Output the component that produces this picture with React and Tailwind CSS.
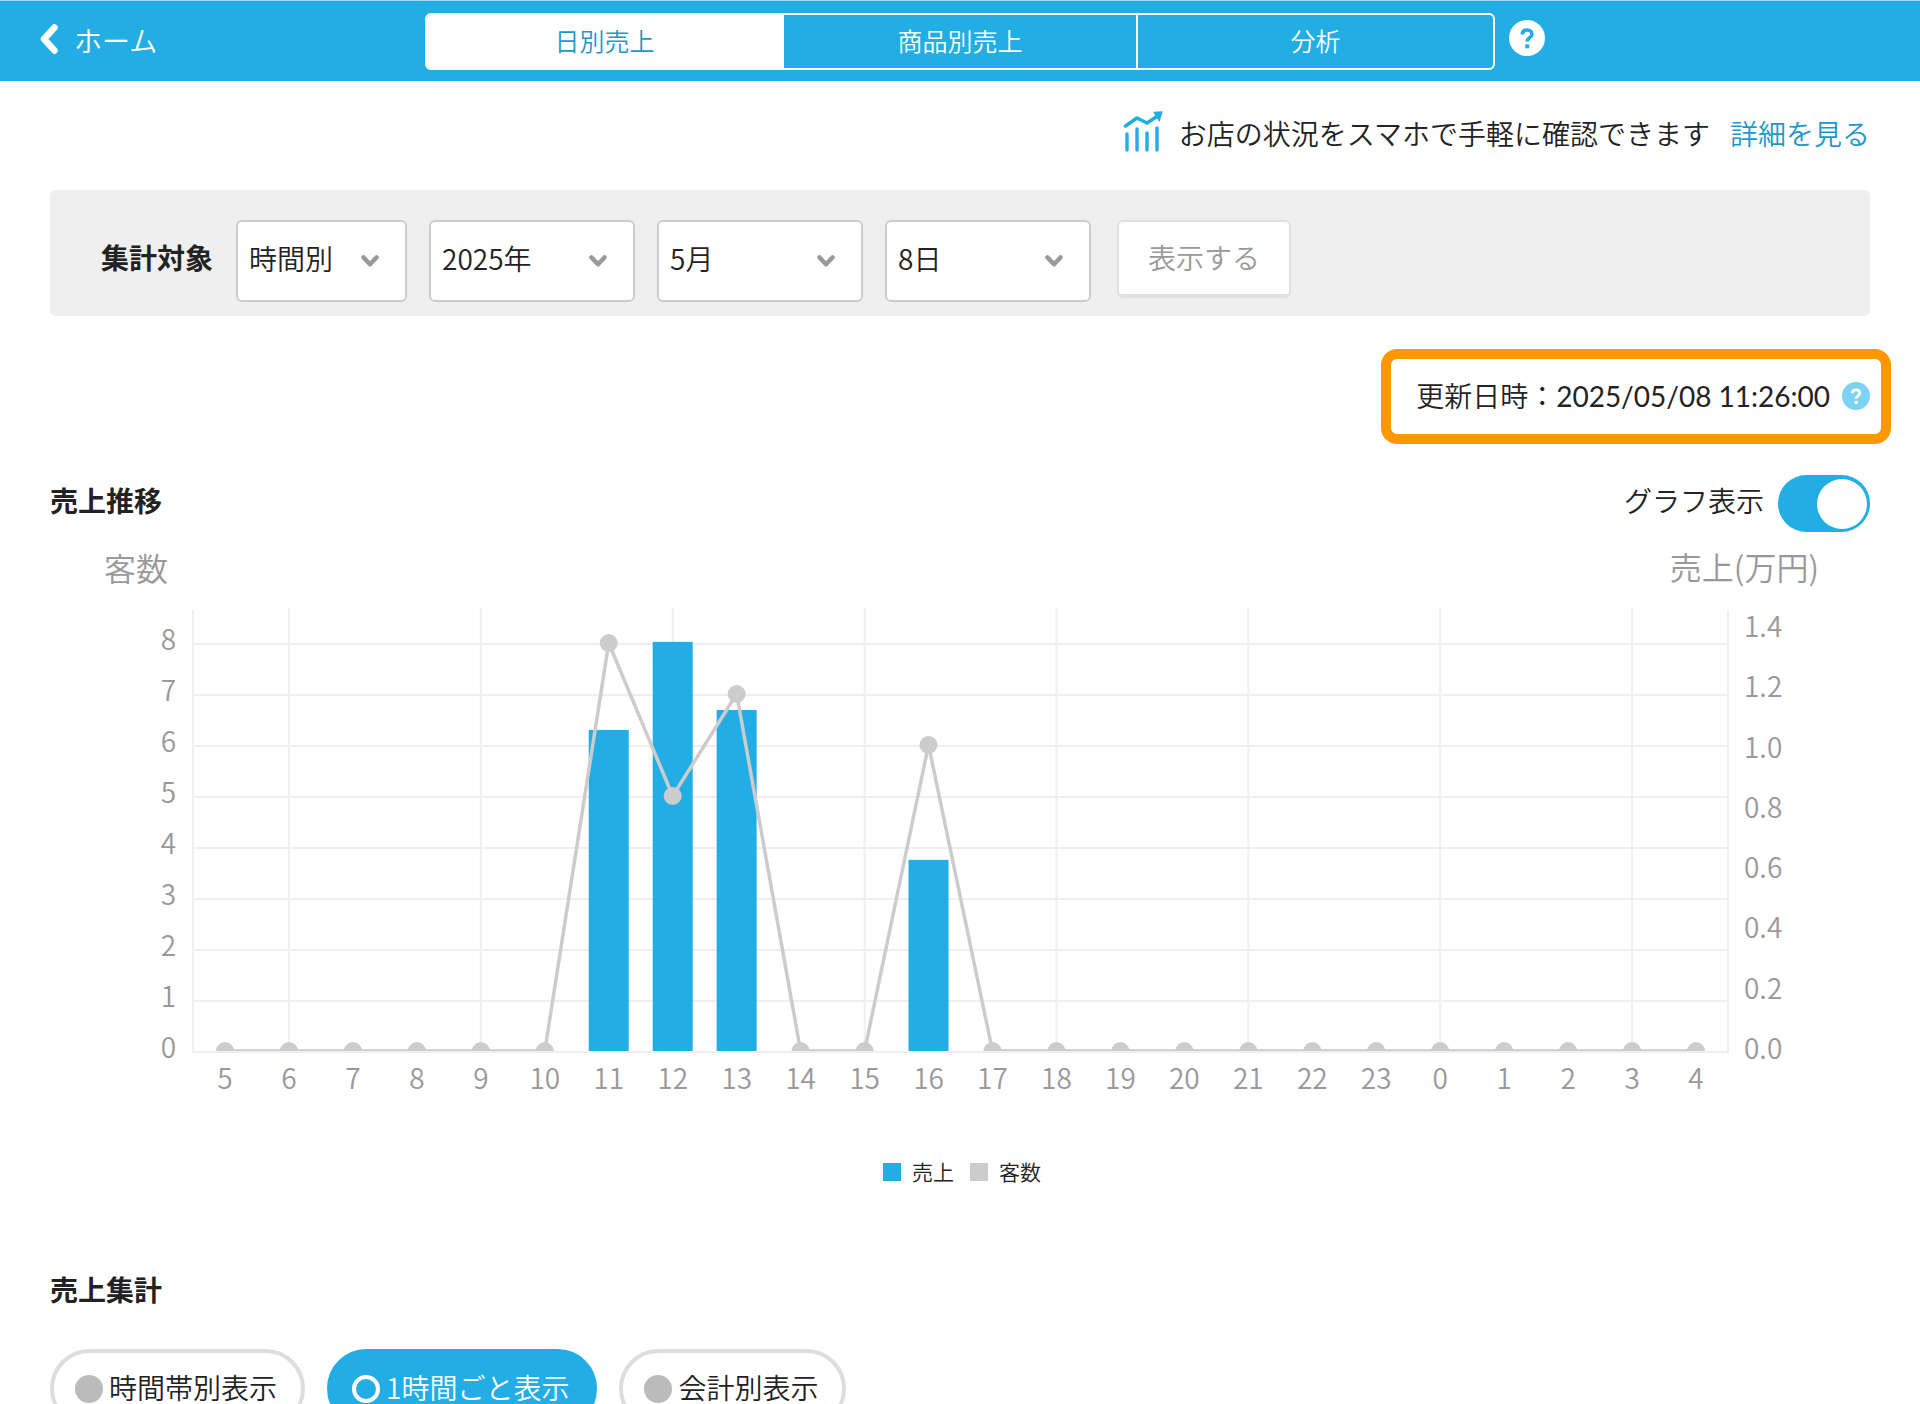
import { useState } from "react";

const hours = [5, 6, 7, 8, 9, 10, 11, 12, 13, 14, 15, 16, 17, 18, 19, 20, 21, 22, 23, 0, 1, 2, 3, 4];
const sales = { 11: 1.065, 12: 1.357, 13: 1.131, 16: 0.634 };
const guests = { 11: 8, 12: 5, 13: 7, 16: 6 };

const plot = { left: 143, right: 1678, top: 80, bottom: 521 };
const columnWidth = (plot.right - plot.left) / hours.length;
const columnX = (i) => plot.left + columnWidth * (i + 0.5);
const guestY = (n) => plot.bottom - n * 51;
const salesY = (v) => plot.bottom - v * 301.5;

function HelpMark({ className }) {
  return (
    <svg viewBox="0 0 36 36" className={className} aria-hidden="true">
      <circle cx="18" cy="18" r="18" fill="currentColor" />
      <path
        d="M13.300 14.600c0-3 2-4.600 4.800-4.600s4.800 1.600 4.800 4.200c0 3.700-4.700 3.500-4.700 7.300"
        fill="none"
        strokeWidth="3.600"
        className="stroke-(--mark)"
      />
      <rect x="16.200" y="24.300" width="4" height="4" className="fill-(--mark)" />
    </svg>
  );
}

function Header() {
  const tabs = ["日別売上", "商品別売上", "分析"];
  const [active, setActive] = useState(0);
  return (
    <header className="grid h-[81px] grid-cols-[1fr_minmax(0,1070px)_1fr] items-center border-t border-[#a5dcf5] bg-[#22ade5] text-white">
      <a href="#home" className="flex items-center gap-4 pl-10 text-[28px] leading-10">
        <svg viewBox="0 0 18 30" className="-mt-1 h-[30px] w-[18px]" fill="none" stroke="currentColor" strokeWidth="6.500" strokeLinecap="round" strokeLinejoin="round" aria-hidden="true">
          <path d="M14.500 3.500 4 15l10.500 11.500" />
        </svg>
        ホーム
      </a>
      <nav className="grid h-[57px] grid-cols-[355fr_354fr_357fr] overflow-hidden rounded-md border-2 border-white text-[25px] leading-9">
        {tabs.map((tab, i) => (
          <button
            key={tab}
            type="button"
            aria-pressed={i === active}
            onClick={() => setActive(i)}
            className={
              i === active
                ? "bg-white text-[#1c98c9]"
                : "border-l-2 border-white first:border-l-0"
            }
          >
            {tab}
          </button>
        ))}
      </nav>
      <button type="button" aria-label="ヘルプ" className="-mt-1.5 ml-3.5 h-9 w-9 [--mark:#22ade5]">
        <HelpMark className="h-9 w-9" />
      </button>
    </header>
  );
}

function PromoLine() {
  return (
    <div className="flex h-[109px] items-center justify-end gap-4 pb-1 text-[28px] leading-10">
      <svg viewBox="0 0 40 42" className="-mt-1 h-[42px] w-10 text-[#22ade5]" fill="none" stroke="currentColor" strokeLinecap="round" strokeLinejoin="round" aria-hidden="true">
        <path strokeWidth="3.400" d="M4 23v16M14 18v21M24 22v17M34 17v22" />
        <path strokeWidth="3.600" d="M2.500 15 14 7l10 5L34 5.500" />
        <path fill="currentColor" stroke="none" d="M30 .8 39.800.3l-3.300 11z" />
      </svg>
      <p>お店の状況をスマホで手軽に確認できます</p>
      <a href="#detail" className="ml-1 text-[#1c98c9]">詳細を見る</a>
    </div>
  );
}

function SelectBox({ label, value, options, wide }) {
  return (
    <div className={wide ? "relative w-[206px]" : "relative w-[171px]"}>
      <select
        aria-label={label}
        defaultValue={value}
        className="h-[82px] w-full appearance-none rounded-md border-2 border-[#ccc] bg-white pb-1.5 pl-[11px] font-['Noto_Sans_CJK_JP',sans-serif] text-[28px] text-[#222]"
      >
        {options.map((o) => (
          <option key={o}>{o}</option>
        ))}
      </select>
      <svg viewBox="0 0 18 12" className="pointer-events-none absolute top-[35px] right-[28px] h-3 w-[18px]" fill="none" stroke="#999" strokeWidth="4.500" strokeLinecap="round" strokeLinejoin="round" aria-hidden="true">
        <path d="M2.500 2.500 9 9.300l6.500-6.800" />
      </svg>
    </div>
  );
}

function FilterPanel() {
  return (
    <form className="flex h-[126px] items-start rounded-md bg-[#efefef] pt-[30px] pl-[51px]" onSubmit={(e) => e.preventDefault()}>
      <span className="mr-[23px] pt-[18px] text-[28px] leading-10 font-bold">集計対象</span>
      <div className="flex gap-[22px]">
        <SelectBox label="集計単位" value="時間別" options={["時間別", "日別", "月別"]} />
        <SelectBox wide label="年" value="2025年" options={["2024年", "2025年"]} />
        <SelectBox wide label="月" value="5月" options={["4月", "5月", "6月"]} />
        <SelectBox wide label="日" value="8日" options={["7日", "8日", "9日"]} />
      </div>
      <button type="submit" className="ml-[26px] h-[78px] w-[174px] rounded-md border-2 border-b-4 border-[#e0e0e0] bg-white text-[28px] text-[#999]">
        表示する
      </button>
    </form>
  );
}

function SalesChart() {
  return (
    <svg viewBox="0 0 1820 580" className="-mt-0.5 block h-auto w-full font-['Noto_Sans_CJK_JP',sans-serif]" role="img" aria-label="売上推移グラフ">
      <defs>
        <clipPath id="plot-area">
          <rect x={plot.left} y="0" width={plot.right - plot.left} height={plot.bottom} />
        </clipPath>
      </defs>
      <g fill="#999" fontSize="32">
        <text x="54" y="51">客数</text>
        <text x="1769" y="50" textAnchor="end">売上(万円)</text>
      </g>
      <g stroke="#efefef" strokeWidth="2">
        {[0, 1, 2, 3, 4, 5, 6, 7, 8].map((n) => (
          <line key={n} x1={plot.left} x2={plot.right} y1={guestY(n) + 1} y2={guestY(n) + 1} />
        ))}
        {hours.map((h, i) =>
          h % 3 === 0 ? <line key={h} x1={columnX(i)} x2={columnX(i)} y1={plot.top - 2} y2={plot.bottom} /> : null
        )}
        <line x1={plot.left} x2={plot.left} y1={plot.top} y2={plot.bottom + 2} />
        <line x1={plot.right} x2={plot.right} y1={plot.top} y2={plot.bottom + 2} />
      </g>
      <g clipPath="url(#plot-area)">
        {hours.map((h, i) =>
          sales[h] ? (
            <rect key={h} x={columnX(i) - 20} y={salesY(sales[h])} width="40" height={sales[h] * 301.5} fill="#22ade5" />
          ) : null
        )}
        <polyline
          points={hours.map((h, i) => `${columnX(i)},${guestY(guests[h] || 0)}`).join(" ")}
          fill="none"
          stroke="#ccc"
          strokeWidth="3.500"
          strokeLinejoin="round"
        />
        {hours.map((h, i) => (
          <circle key={h} cx={columnX(i)} cy={guestY(guests[h] || 0)} r="9" fill="#ccc" />
        ))}
      </g>
      <g fill="#999" fontSize="28">
        {[0, 1, 2, 3, 4, 5, 6, 7, 8].map((n) => (
          <text key={n} x="126" y={guestY(n) + 7} textAnchor="end">{n}</text>
        ))}
        {[0, 0.2, 0.4, 0.6, 0.8, 1, 1.2, 1.4].map((v) => (
          <text key={v} x="1694" y={salesY(v) + 8}>{v.toFixed(1)}</text>
        ))}
        {hours.map((h, i) => (
          <text key={h} x={columnX(i)} y="559" textAnchor="middle">{h}</text>
        ))}
      </g>
    </svg>
  );
}

function Legend() {
  return (
    <ul className="mt-12 flex h-7 items-center justify-center gap-4 pl-1 text-[21px] leading-7">
      <li className="flex items-center gap-[11px]">
        <span className="size-[18px] bg-[#22ade5]" />
        売上
      </li>
      <li className="flex items-center gap-[11px]">
        <span className="size-[18px] bg-[#ccc]" />
        客数
      </li>
    </ul>
  );
}

function ViewOptions() {
  const views = ["時間帯別表示", "1時間ごと表示", "会計別表示"];
  return (
    <div role="radiogroup" aria-label="表示単位" className="mt-[39px] flex gap-[22px]">
      {views.map((view, i) => (
        <label
          key={view}
          className="flex h-[79px] items-center gap-1.5 rounded-full border-4 border-[#ddd] pr-6 pl-[21px] font-['Noto_Sans_CJK_JP',sans-serif] text-[28px] leading-9 has-checked:border-[#22ade5] has-checked:bg-[#22ade5] has-checked:text-white"
        >
          <input
            type="radio"
            name="view"
            defaultChecked={i === 1}
            className="size-7 appearance-none rounded-full bg-[#bbb] checked:border-4 checked:border-white checked:bg-transparent"
          />
          <span className="-mt-1">{view}</span>
        </label>
      ))}
    </div>
  );
}

export default function App() {
  return (
    <div className="h-screen overflow-hidden bg-white font-['Lato','Noto_Sans_CJK_JP',sans-serif] font-[350] text-[#222]" lang="ja">
      <Header />
      <main className="px-[50px]">
        <PromoLine />
        <FilterPanel />
        <div className="mt-[33px] -mr-[21px] flex justify-end">
          <div className="flex h-[95px] items-center gap-3 rounded-2xl border-10 border-[#ff9800] pr-[11px] pb-0.5 pl-[25px] text-[28px] leading-10">
            <p>
              更新日時：<time className="font-normal">2025/05/08 11:26:00</time>
            </p>
            <button type="button" aria-label="更新日時について" className="size-7 text-[#7dd3f3] [--mark:#fff]">
              <HelpMark className="size-7" />
            </button>
          </div>
        </div>
        <section>
          <div className="mt-[31px] flex h-[57px] items-center justify-between text-[28px] leading-10">
            <h2 className="-mt-1.5 font-bold">売上推移</h2>
            <label className="flex items-center gap-[14px]">
              <span className="-mt-1.5">グラフ表示</span>
              <span className="relative h-[57px] w-[92px]">
                <input type="checkbox" role="switch" defaultChecked className="peer size-full appearance-none rounded-full bg-[#ccc] checked:bg-[#22ade5]" />
                <span className="pointer-events-none absolute top-1 left-1 size-[50px] rounded-full bg-white peer-checked:right-[3px] peer-checked:left-auto" />
              </span>
            </label>
          </div>
          <SalesChart />
          <Legend />
        </section>
        <section>
          <h2 className="mt-[84px] text-[28px] leading-10 font-bold">売上集計</h2>
          <ViewOptions />
        </section>
      </main>
    </div>
  );
}
